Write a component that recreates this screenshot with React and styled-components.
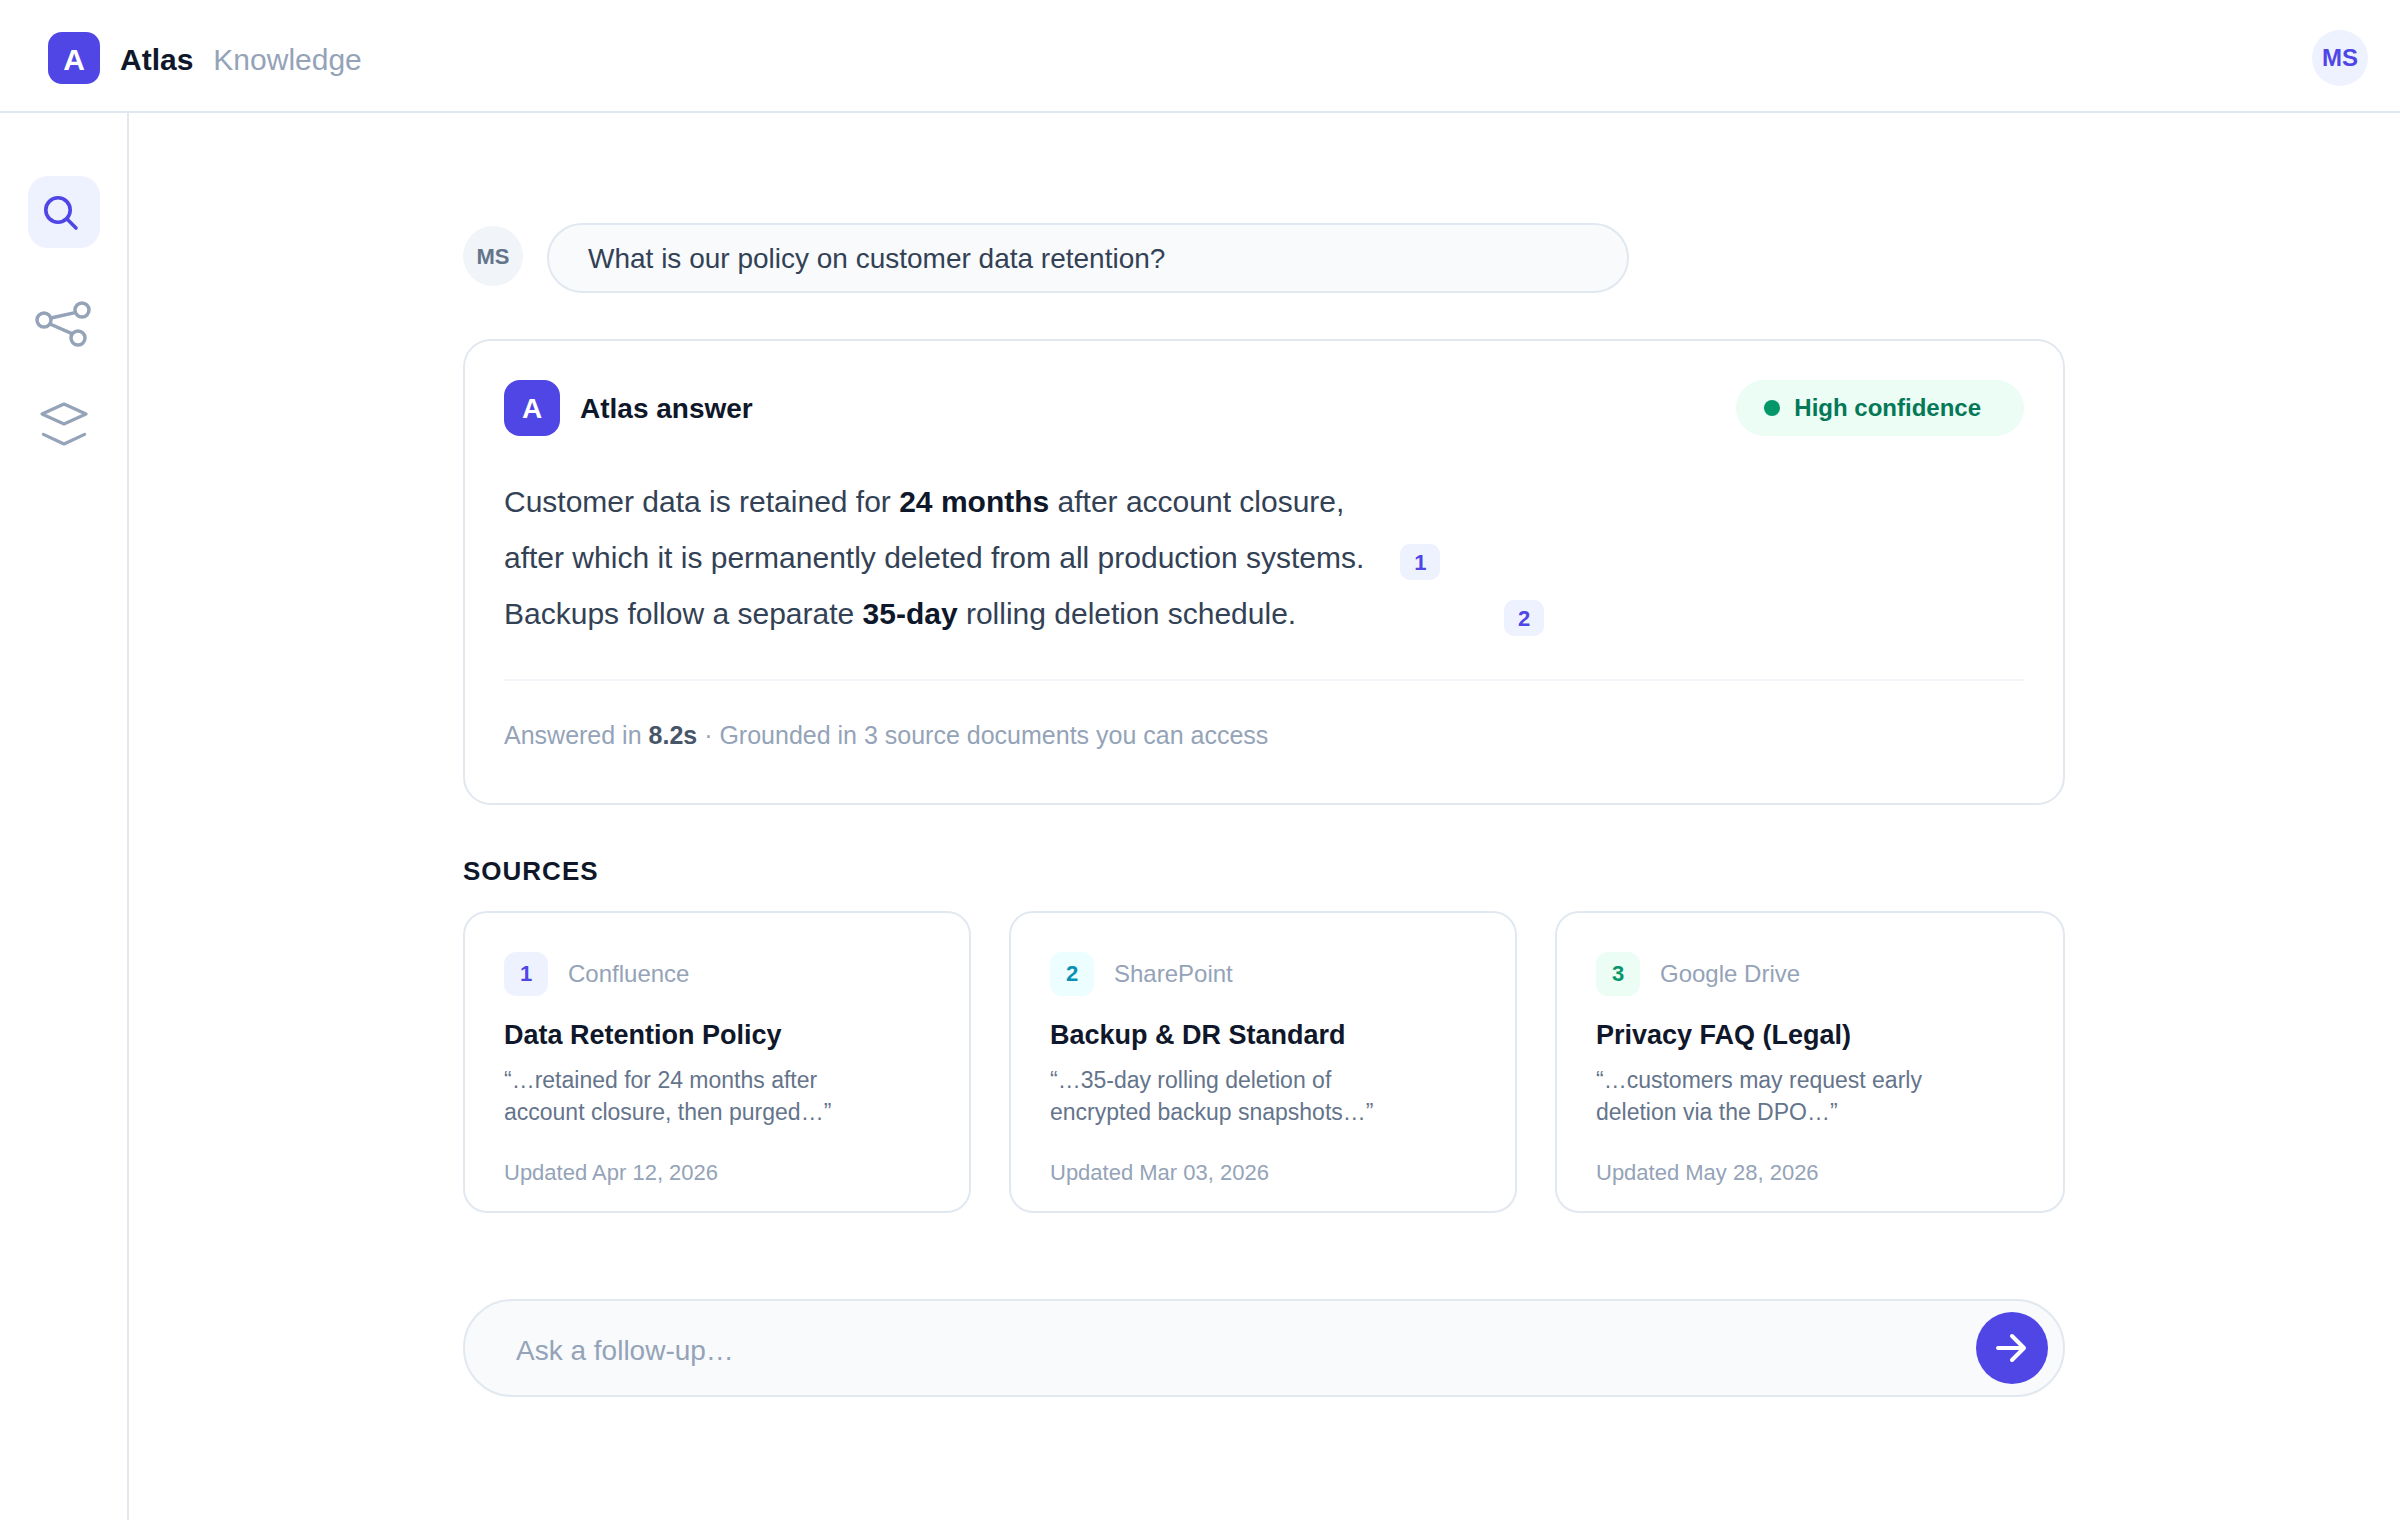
import React, { useState } from "react";
import styled, { createGlobalStyle } from "styled-components";

const sources = [
  {
    id: 1,
    origin: "Confluence",
    title: "Data Retention Policy",
    quote: ["“…retained for 24 months after", "account closure, then purged…”"],
    updated: "Updated Apr 12, 2026",
    color: "#4f46e5",
    background: "#eef2ff",
  },
  {
    id: 2,
    origin: "SharePoint",
    title: "Backup & DR Standard",
    quote: ["“…35-day rolling deletion of", "encrypted backup snapshots…”"],
    updated: "Updated Mar 03, 2026",
    color: "#0891b2",
    background: "#ecfeff",
  },
  {
    id: 3,
    origin: "Google Drive",
    title: "Privacy FAQ (Legal)",
    quote: ["“…customers may request early", "deletion via the DPO…”"],
    updated: "Updated May 28, 2026",
    color: "#059669",
    background: "#ecfdf5",
  },
];

function SearchIcon() {
  return (
    <RailIcon viewBox="0 0 72 72" strokeWidth="3.6" strokeLinecap="round">
      <circle cx="30" cy="34" r="12.2" />
      <path d="M39 43L48 52" />
    </RailIcon>
  );
}

function GraphIcon() {
  return (
    <RailIcon viewBox="0 0 72 72" strokeWidth="3.5">
      <circle cx="16" cy="44" r="7" />
      <circle cx="54" cy="34" r="7" />
      <circle cx="50" cy="62" r="7" />
      <path d="M23 42L47 36.6M22 48L44 57.6" />
    </RailIcon>
  );
}

function LayersIcon() {
  return (
    <RailIcon
      viewBox="0 0 72 72"
      strokeWidth="3.2"
      strokeLinecap="round"
      strokeLinejoin="round"
    >
      <path d="M36 28L58 38L36 48L14 38Z" />
      <path d="M15.4 58.4L36 68L56.6 58.4" />
    </RailIcon>
  );
}

function App() {
  const [question, setQuestion] = useState("");

  const handleSubmit = (e) => {
    e.preventDefault();
    setQuestion("");
  };

  return (
    <Page>
      <GlobalStyle />
      <Header>
        <Brand>
          <Logo>A</Logo>
          <BrandName>Atlas</BrandName>
          <BrandProduct>Knowledge</BrandProduct>
        </Brand>
        <AccountButton type="button">MS</AccountButton>
      </Header>
      <Body>
        <Rail>
          <RailButton type="button" aria-label="Search" $active>
            <SearchIcon />
          </RailButton>
          <RailButton type="button" aria-label="Graph">
            <GraphIcon />
          </RailButton>
          <RailButton type="button" aria-label="Collections">
            <LayersIcon />
          </RailButton>
        </Rail>
        <Main>
          <Column>
            <QuestionRow>
              <UserAvatar>MS</UserAvatar>
              <Question>What is our policy on customer data retention?</Question>
            </QuestionRow>

            <AnswerCard>
              <AnswerHeader>
                <AnswerLogo>A</AnswerLogo>
                <AnswerTitle>Atlas answer</AnswerTitle>
                <Confidence>
                  <Dot />
                  High confidence
                </Confidence>
              </AnswerHeader>
              <Answer>
                <AnswerLine>
                  <span>
                    Customer data is retained for <b>24 months</b> after account
                    closure,
                  </span>
                </AnswerLine>
                <AnswerLine>
                  <span>
                    after which it is permanently deleted from all production
                    systems.
                  </span>
                  <Cite href="#source-1" $gap={36}>
                    1
                  </Cite>
                </AnswerLine>
                <AnswerLine>
                  <span>
                    Backups follow a separate <b>35-day</b> rolling deletion
                    schedule.
                  </span>
                  <Cite href="#source-2" $gap={208}>
                    2
                  </Cite>
                </AnswerLine>
              </Answer>
              <AnswerMeta>
                Answered in <b>8.2s</b> · Grounded in 3 source documents you can
                access
              </AnswerMeta>
            </AnswerCard>

            <SourcesTitle>SOURCES</SourcesTitle>
            <SourceGrid>
              {sources.map((source) => (
                <SourceCard key={source.id} id={`source-${source.id}`}>
                  <SourceTop>
                    <SourceNumber
                      $color={source.color}
                      $background={source.background}
                    >
                      {source.id}
                    </SourceNumber>
                    {source.origin}
                  </SourceTop>
                  <SourceName>{source.title}</SourceName>
                  <Quote>
                    {source.quote[0]}
                    <br />
                    {source.quote[1]}
                  </Quote>
                  <Updated>{source.updated}</Updated>
                </SourceCard>
              ))}
            </SourceGrid>

            <FollowUp onSubmit={handleSubmit}>
              <FollowUpInput
                type="text"
                aria-label="Ask a follow-up"
                placeholder="Ask a follow-up…"
                value={question}
                onChange={(e) => {
                  setQuestion(e.target.value);
                }}
              />
              <SendButton type="submit" aria-label="Send">
                <svg
                  width="72"
                  height="72"
                  viewBox="0 0 72 72"
                  fill="none"
                  stroke="#fff"
                  strokeWidth="4"
                  strokeLinecap="round"
                  strokeLinejoin="round"
                >
                  <path d="M22 36H48M36 24L48 36L36 48" />
                </svg>
              </SendButton>
            </FollowUp>
          </Column>
        </Main>
      </Body>
    </Page>
  );
}
export default App;

const GlobalStyle = createGlobalStyle`
  * {
    box-sizing: border-box;
  }
  body {
    margin: 0;
    background: #fff;
    color: #0f172a;
    font-family: "Liberation Sans", Arial, sans-serif;
  }
  h1, h2, h3, p {
    margin: 0;
  }
  button, input {
    font-family: inherit;
  }
`;

const Page = styled.div`
  min-height: 100vh;
  display: flex;
  flex-direction: column;
`;

const Header = styled.header`
  display: flex;
  align-items: center;
  justify-content: space-between;
  height: 113px;
  padding: 5px 32px 0 48px;
  border-bottom: 2px solid #e2e8f0;
`;

const Brand = styled.div`
  display: flex;
  align-items: center;
  font-size: 30px;
  line-height: 36px;
`;

const Logo = styled.div`
  width: 52px;
  height: 52px;
  padding-top: 4px;
  border-radius: 14px;
  background: #4f46e5;
  color: #fff;
  font-size: 30px;
  font-weight: 700;
  line-height: 48px;
  text-align: center;
`;

const BrandName = styled.span`
  margin-left: 20px;
  padding-top: 4px;
  font-weight: 700;
`;

const BrandProduct = styled.span`
  margin-left: 20px;
  padding-top: 4px;
  color: #94a3b8;
`;

const AccountButton = styled.button`
  width: 56px;
  height: 56px;
  padding: 0;
  border: none;
  border-radius: 50%;
  background: #eef2ff;
  color: #4f46e5;
  font-size: 24px;
  font-weight: 700;
  cursor: pointer;
`;

const Body = styled.div`
  flex: 1;
  display: flex;
`;

const Rail = styled.nav`
  flex: none;
  display: flex;
  flex-direction: column;
  gap: 28px;
  width: 129px;
  padding: 63px 0 0 28px;
  border-right: 2px solid #e2e8f0;
`;

const RailButton = styled.button`
  width: 72px;
  height: 72px;
  padding: 0;
  border: none;
  border-radius: 20px;
  background: ${(props) => (props.$active ? "#eef2ff" : "transparent")};
  color: ${(props) => (props.$active ? "#4f46e5" : "#94a3b8")};
  cursor: pointer;
`;

const RailIcon = styled.svg`
  display: block;
  width: 72px;
  height: 72px;
  fill: none;
  stroke: currentColor;
`;

const Main = styled.main`
  flex: 1;
  display: flex;
  justify-content: center;
  padding: 110px 33px 64px 32px;
`;

const Column = styled.div`
  flex: 1;
  max-width: 1602px;
`;

const QuestionRow = styled.div`
  display: flex;
  align-items: flex-start;
  gap: 24px;
`;

const UserAvatar = styled.div`
  flex: none;
  width: 60px;
  height: 60px;
  margin-top: 3px;
  padding-top: 2px;
  border-radius: 50%;
  background: #f1f5f9;
  color: #64748b;
  font-size: 22px;
  font-weight: 700;
  line-height: 58px;
  text-align: center;
`;

const Question = styled.p`
  flex: 1;
  max-width: 1082px;
  padding: 17px 39px 15px;
  border: 2px solid #e2e8f0;
  border-radius: 35px;
  background: #f8fafc;
  color: #334155;
  font-size: 28px;
  line-height: 34px;
`;

const AnswerCard = styled.section`
  margin-top: 46px;
  padding: 39px 39px 52px;
  border: 2px solid #e2e8f0;
  border-radius: 28px;
`;

const AnswerHeader = styled.div`
  display: flex;
  align-items: center;
`;

const AnswerLogo = styled(Logo)`
  width: 56px;
  height: 56px;
  padding-top: 2px;
  border-radius: 16px;
  font-size: 28px;
  line-height: 54px;
`;

const AnswerTitle = styled.h1`
  margin-left: 20px;
  padding-top: 2px;
  font-size: 28px;
  line-height: 34px;
`;

const Confidence = styled.div`
  display: flex;
  align-items: center;
  margin-left: auto;
  padding: 0 43px 0 28px;
  border-radius: 28px;
  background: #ecfdf5;
  color: #047857;
  font-size: 24px;
  font-weight: 700;
  line-height: 56px;
`;

const Dot = styled.span`
  width: 16px;
  height: 16px;
  margin-right: 14px;
  border-radius: 50%;
  background: #059669;
`;

const Answer = styled.div`
  margin-top: 38px;
  padding-bottom: 37px;
  border-bottom: 2px solid #f1f5f9;
  color: #334155;
  font-size: 30px;
  line-height: 56px;

  b {
    color: #0f172a;
  }
`;

const AnswerLine = styled.div`
  display: flex;
  align-items: center;
`;

const Cite = styled.a`
  width: 40px;
  margin: 8px 0 0 ${(props) => props.$gap}px;
  padding-top: 2px;
  border-radius: 10px;
  background: #eef2ff;
  color: #4f46e5;
  font-size: 22px;
  font-weight: 700;
  line-height: 34px;
  text-align: center;
  text-decoration: none;
`;

const AnswerMeta = styled.p`
  margin-top: 38px;
  color: #94a3b8;
  font-size: 25px;
  line-height: 32px;

  b {
    color: #475569;
  }
`;

const SourcesTitle = styled.h2`
  margin: 50px 0 24px;
  font-size: 26px;
  line-height: 32px;
  letter-spacing: 1px;
`;

const SourceGrid = styled.div`
  display: grid;
  grid-template-columns: 254fr 254fr 255fr;
  gap: 38px;
`;

const SourceCard = styled.article`
  padding: 39px 39px 24px;
  border: 2px solid #e2e8f0;
  border-radius: 24px;
`;

const SourceTop = styled.div`
  display: flex;
  align-items: center;
  gap: 20px;
  color: #94a3b8;
  font-size: 24px;
  line-height: 44px;
`;

const SourceNumber = styled.span`
  width: 44px;
  border-radius: 12px;
  background: ${(props) => props.$background};
  color: ${(props) => props.$color};
  font-size: 22px;
  font-weight: 700;
  text-align: center;
`;

const SourceName = styled.h3`
  margin-top: 23px;
  font-size: 27px;
  line-height: 32px;
`;

const Quote = styled.p`
  margin-top: 13px;
  color: #64748b;
  font-size: 23px;
  line-height: 32px;
`;

const Updated = styled.p`
  margin-top: 31px;
  color: #94a3b8;
  font-size: 22px;
  line-height: 28px;
`;

const FollowUp = styled.form`
  display: flex;
  margin-top: 86px;
  padding: 11px 15px 11px 51px;
  border: 2px solid #e2e8f0;
  border-radius: 49px;
  background: #f8fafc;
`;

const FollowUpInput = styled.input`
  flex: 1;
  min-width: 0;
  padding: 6px 0 0;
  border: none;
  outline: none;
  background: transparent;
  color: #334155;
  font-size: 28px;

  &::placeholder {
    color: #94a3b8;
  }
`;

const SendButton = styled.button`
  width: 72px;
  height: 72px;
  padding: 0;
  border: none;
  border-radius: 50%;
  background: #4f46e5;
  cursor: pointer;

  svg {
    display: block;
  }
`;
